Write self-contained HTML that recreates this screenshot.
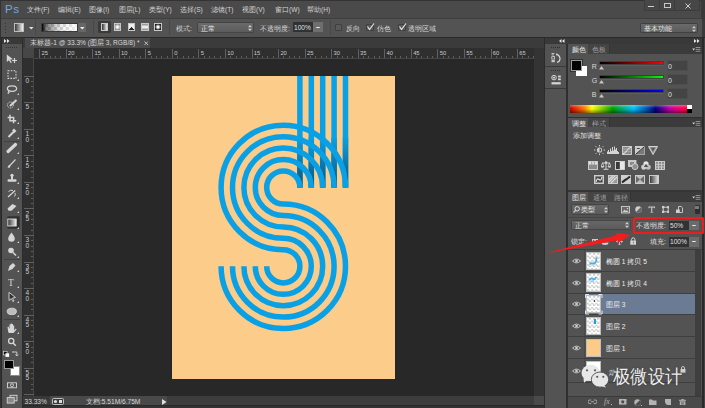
<!DOCTYPE html><html><head><meta charset="utf-8"><style>
*{margin:0;padding:0;box-sizing:border-box}
html,body{width:705px;height:408px;overflow:hidden;background:#282828;font-family:"Liberation Sans",sans-serif}
.t{position:absolute;white-space:nowrap;line-height:1}
</style></head><body>
<div style="position:absolute;left:0px;top:0px;width:705px;height:18px;background:#4a4a4a"></div>
<div style="position:absolute;left:0px;top:0px;width:705px;height:1px;background:#333"></div>
<div style="position:absolute;left:0px;top:0px;width:1px;height:408px;background:#333"></div>
<div class="t" style="left:5px;top:3.2px;font-size:11.6px;color:#70a8e0;letter-spacing:0.4px">Ps</div>
<div class="t" style="left:27px;top:6.5px;font-size:6.6px;color:#d4d4d4;">文件(F)</div>
<div class="t" style="left:58px;top:6.5px;font-size:6.6px;color:#d4d4d4;">编辑(E)</div>
<div class="t" style="left:89px;top:6.5px;font-size:6.6px;color:#d4d4d4;">图像(I)</div>
<div class="t" style="left:118.5px;top:6.5px;font-size:6.6px;color:#d4d4d4;">图层(L)</div>
<div class="t" style="left:149px;top:6.5px;font-size:6.6px;color:#d4d4d4;">类型(Y)</div>
<div class="t" style="left:180px;top:6.5px;font-size:6.6px;color:#d4d4d4;">选择(S)</div>
<div class="t" style="left:211px;top:6.5px;font-size:6.6px;color:#d4d4d4;">滤镜(T)</div>
<div class="t" style="left:242px;top:6.5px;font-size:6.6px;color:#d4d4d4;">视图(V)</div>
<div class="t" style="left:275px;top:6.5px;font-size:6.6px;color:#d4d4d4;">窗口(W)</div>
<div class="t" style="left:307px;top:6.5px;font-size:6.6px;color:#d4d4d4;">帮助(H)</div>
<div style="position:absolute;left:644px;top:0px;width:56px;height:10.5px;background:#474747;border:1px solid #3c3c3c;border-top:none"></div>
<div style="position:absolute;left:659px;top:0px;width:1px;height:10px;background:#3c3c3c"></div>
<div style="position:absolute;left:674px;top:0px;width:1px;height:10px;background:#3c3c3c"></div>
<div style="position:absolute;left:648.3px;top:6.3px;width:6px;height:1.1px;background:#cfcfcf"></div>
<div style="position:absolute;left:664px;top:3px;width:7px;height:5px;border:1.5px solid #c8c8c8"></div>
<svg style="position:absolute;left:685px;top:2.5px" width="6" height="6"><path d="M0.5 0.5L5.5 5.5M5.5 0.5L0.5 5.5" stroke="#d0d0d0" stroke-width="1"/></svg>
<div style="position:absolute;left:701px;top:0px;width:4px;height:408px;background:#3a3a3a"></div>
<div style="position:absolute;left:1px;top:18px;width:701px;height:19px;background:#535353;border-top:1px solid #5e5e5e"></div>
<div style="position:absolute;left:1px;top:17.5px;width:701px;height:1px;background:#3e3e3e"></div>
<div style="position:absolute;left:4.5px;top:22.5px;width:1.2px;height:1.2px;background:#333"></div>
<div style="position:absolute;left:4.5px;top:25.5px;width:1.2px;height:1.2px;background:#333"></div>
<div style="position:absolute;left:4.5px;top:28.5px;width:1.2px;height:1.2px;background:#333"></div>
<div style="position:absolute;left:4.5px;top:31.5px;width:1.2px;height:1.2px;background:#333"></div>
<div style="position:absolute;left:14px;top:23px;width:10px;height:8.5px;background:linear-gradient(90deg,#3a3a3a,#f4f4f4);border:1px solid #bdbdbd"></div>
<svg style="position:absolute;left:28.5px;top:27px" width="5" height="3"><path d="M0 0H4.5L2.25 2.5Z" fill="#e0e0e0"/></svg>
<div style="position:absolute;left:35px;top:20px;width:1px;height:15px;background:#474747"></div>
<div style="position:absolute;left:40.5px;top:23px;width:37.5px;height:9.2px;background:linear-gradient(90deg,#000 0%,rgba(0,0,0,.5) 12%,rgba(0,0,0,.15) 40%,rgba(255,255,255,0) 60%,rgba(255,255,255,.7) 100%),repeating-conic-gradient(#cfcfcf 0 25%,#f4f4f4 0 50%) 0 0/6px 6px;border:0.6px solid #3a3a3a"></div>
<div style="position:absolute;left:78px;top:23px;width:8px;height:9.2px;background:#666"></div>
<svg style="position:absolute;left:80px;top:27px" width="5" height="3"><path d="M0 0H4.5L2.25 2.5Z" fill="#eee"/></svg>
<div style="position:absolute;left:92.5px;top:20px;width:1px;height:15px;background:#474747"></div>
<div style="position:absolute;left:98px;top:21px;width:12.5px;height:12px;background:#3a3a3a;border-radius:1.5px"></div>
<div style="position:absolute;left:100.6px;top:23.2px;width:7.8px;height:7.6px;background:linear-gradient(90deg,#333,#eee);border:1px solid #c8c8c8"></div>
<div style="position:absolute;left:113.6px;top:23.2px;width:7.8px;height:7.6px;background:radial-gradient(circle,#fff 15%,#888 80%);border:1px solid #c8c8c8"></div>
<div style="position:absolute;left:127.6px;top:23.2px;width:7.8px;height:7.6px;background:conic-gradient(from 135deg,#222 0 90deg,#eee 90deg 360deg);border:1px solid #c8c8c8"></div>
<div style="position:absolute;left:140.8px;top:23.2px;width:7.8px;height:7.6px;background:linear-gradient(180deg,#888,#fff 50%,#888);border:1px solid #c8c8c8"></div>
<div style="position:absolute;left:154.4px;top:23.2px;width:7.8px;height:7.6px;background:radial-gradient(circle,#fff 20%,#222 70%);border:1px solid #c8c8c8"></div>
<div style="position:absolute;left:169px;top:20px;width:1px;height:15px;background:#474747"></div>
<div class="t" style="left:176px;top:25.5px;font-size:6.6px;color:#d8d8d8;">模式:</div>
<div style="position:absolute;left:196.6px;top:22.2px;width:57.4px;height:11px;background:linear-gradient(#6a6a6a,#5c5c5c);border:1px solid #454545;border-radius:1.5px"></div>
<div class="t" style="left:201px;top:25.5px;font-size:6.6px;color:#e4e4e4;">正常</div>
<svg style="position:absolute;left:248px;top:25px" width="4" height="6"><path d="M0 2.2L2 0L4 2.2ZM0 3.8L2 6L4 3.8Z" fill="#d0d0d0"/></svg>
<div class="t" style="left:260px;top:25.5px;font-size:6.6px;color:#d8d8d8;">不透明度:</div>
<div style="position:absolute;left:292.8px;top:21.8px;width:20.5px;height:10.6px;background:#313131"></div>
<div class="t" style="left:294px;top:24.8px;font-size:6.6px;color:#dde3e8;">100%</div>
<div style="position:absolute;left:313.3px;top:21.8px;width:10px;height:10.6px;background:#6e6e6e"></div>
<svg style="position:absolute;left:316.3px;top:26.6px" width="4" height="1.5"><path d="M0 0H4L3.2 1.3H0.8Z" fill="#eeeeee"/></svg>
<div style="position:absolute;left:329.5px;top:20px;width:1px;height:15px;background:#474747"></div>
<div style="position:absolute;left:334.6px;top:23.5px;width:7.8px;height:7.8px;background:#595959;border:1px solid #3f3f3f;border-radius:1px"></div>
<div class="t" style="left:345.5px;top:25.5px;font-size:6.6px;color:#d8d8d8;">反向</div>
<div style="position:absolute;left:366.4px;top:23.5px;width:7.8px;height:7.8px;background:#595959;border:1px solid #3f3f3f;border-radius:1px"></div>
<svg style="position:absolute;left:366px;top:22px" width="9" height="9"><path d="M1.5 4.5L3.5 7.5L8 1.5" stroke="#e8e8e8" stroke-width="1.1" fill="none"/></svg>
<div class="t" style="left:377px;top:25.5px;font-size:6.6px;color:#d8d8d8;">仿色</div>
<div style="position:absolute;left:398.3px;top:23.5px;width:7.8px;height:7.8px;background:#595959;border:1px solid #3f3f3f;border-radius:1px"></div>
<svg style="position:absolute;left:398px;top:22px" width="9" height="9"><path d="M1.5 4.5L3.5 7.5L8 1.5" stroke="#e8e8e8" stroke-width="1.1" fill="none"/></svg>
<div class="t" style="left:408px;top:25.5px;font-size:6.6px;color:#d8d8d8;">透明区域</div>
<div style="position:absolute;left:640px;top:23px;width:58px;height:10.3px;background:linear-gradient(#6a6a6a,#5c5c5c);border:1px solid #404040;border-radius:1.5px"></div>
<div class="t" style="left:644px;top:25.5px;font-size:6.6px;color:#e8e8e8;">基本功能</div>
<svg style="position:absolute;left:692px;top:25.5px" width="4" height="6"><path d="M0 2.2L2 0L4 2.2ZM0 3.8L2 6L4 3.8Z" fill="#d0d0d0"/></svg>
<div style="position:absolute;left:0px;top:36.5px;width:705px;height:1px;background:#2a2a2a"></div>
<div style="position:absolute;left:1.5px;top:37.5px;width:20.5px;height:371px;background:#535353"></div>
<div style="position:absolute;left:1.5px;top:37.5px;width:20.5px;height:6px;background:#393939"></div>
<svg style="position:absolute;left:4px;top:39px" width="6" height="4"><path d="M0 0L2.5 2L0 4ZM3 0L5.5 2L3 4Z" fill="#e8e8e8"/></svg>
<div style="position:absolute;left:22px;top:37.5px;width:1px;height:371px;background:#2c2c2c"></div>
<div style="position:absolute;left:6px;top:46.5px;width:11px;height:1px;background:repeating-linear-gradient(90deg,#333 0 1px,transparent 1px 2px)"></div>
<div style="position:absolute;left:6.5px;top:215.9px;width:13.5px;height:13px;background:#2f2f2f;border:1px solid #3a3a3a;border-radius:1.5px"></div>
<svg style="position:absolute;left:0;top:0" width="24" height="408">
<g fill="#d6d6d6" stroke="none">
<path d="M6.8 54.5L13 59.2L10.2 59.6L11.8 62.5L10.6 63L9 60.2L6.8 62Z"/>
<path d="M12 60.5H17M14.5 58V63" stroke="#d6d6d6" stroke-width="1.2"/>
</g>
<rect x="8" y="70.8" width="8" height="7.6" fill="none" stroke="#d6d6d6" stroke-width="1.1" stroke-dasharray="1.6 1.2"/>
<ellipse cx="12" cy="88.6" rx="4.6" ry="2.8" fill="none" stroke="#d6d6d6" stroke-width="1.2"/>
<path d="M8.6 91L8 93.5L9.6 92.5" stroke="#d6d6d6" stroke-width="1" fill="none"/>
<circle cx="10.5" cy="105" r="3" fill="none" stroke="#d6d6d6" stroke-width="1" stroke-dasharray="1.2 0.9"/>
<path d="M10 106L16.5 100" stroke="#d6d6d6" stroke-width="2"/>
<path d="M10 114.8V120.8H16.2M7.6 117.4H13.6V123.3" stroke="#d6d6d6" stroke-width="1.5" fill="none"/>
<path d="M8.5 137L14 131.5" stroke="#d6d6d6" stroke-width="2"/>
<path d="M13 129.5L15.5 132" stroke="#d6d6d6" stroke-width="2.6"/>
<rect x="4" y="141" width="16" height="0.8" fill="#3e3e3e"/>
<path d="M8 151.5L15.5 144.5" stroke="#d6d6d6" stroke-width="3.2" stroke-linecap="round"/>
<path d="M8.5 167L15.5 159.5" stroke="#d6d6d6" stroke-width="1.1"/>
<path d="M7.5 167.5Q8 164.5 10.5 165L9.8 167.8Z" fill="#d6d6d6"/>
<circle cx="12" cy="175.3" r="1.6" fill="#d6d6d6"/>
<rect x="11" y="176" width="2" height="3.5" fill="#d6d6d6"/>
<rect x="7.5" y="179.3" width="9" height="2.5" rx="1" fill="#d6d6d6"/>
<path d="M8 197L15.2 190.5" stroke="#d6d6d6" stroke-width="1.2"/>
<path d="M8.5 191.5Q10.5 189.5 13 190.5M14.5 196.5Q16 194.5 15 193" stroke="#d6d6d6" stroke-width="1" fill="none"/>
<path d="M7.5 208.5L12.5 204L16.5 206L11.5 210.8H8.5Z" fill="#d6d6d6"/>
<rect x="7.8" y="219" width="8.4" height="7" fill="url(#tg)" stroke="#e0e0e0" stroke-width="0.9"/>
<defs><linearGradient id="tg" x1="0" y1="0" x2="1" y2="0"><stop offset="0" stop-color="#333"/><stop offset="1" stop-color="#eee"/></linearGradient></defs>
<path d="M11.5 232.4Q8 237 8.2 238.5A3.3 3.3 0 0 0 14.8 238.5Q15 237 11.5 232.4Z" fill="#d6d6d6"/>
<circle cx="11" cy="250.5" r="2.8" fill="#d6d6d6"/>
<path d="M13 252.5L16 255.5" stroke="#d6d6d6" stroke-width="1.6"/>
<rect x="4" y="259" width="16" height="0.8" fill="#3e3e3e"/>
<path d="M8 271L9.5 266L13 263L15.5 265.5L12.5 269Z" fill="#d6d6d6"/>
<text x="8" y="285.5" font-family="Liberation Serif" font-size="9.5" fill="#d6d6d6">T</text>
<path d="M9 292.3L15.5 297.5L12.5 298L14 301L12.8 301.5L11.3 298.6L9 300.5Z" fill="#333" stroke="#d6d6d6" stroke-width="0.9"/>
<ellipse cx="11.8" cy="311.4" rx="4.6" ry="3.2" fill="#bdbdbd" stroke="#e0e0e0" stroke-width="0.8"/>
<rect x="4" y="319" width="16" height="0.8" fill="#3e3e3e"/>
<path d="M8.2 332L7.5 327L8.5 326.5L9.5 329V324.5H10.6V328.5V323.5H11.8V328.5V324H13V329V325.5H14.2V330.5L15.8 328.6L16.6 329.4L13.5 333H9Z" fill="#d6d6d6"/>
<circle cx="11.2" cy="341" r="2.6" fill="none" stroke="#d6d6d6" stroke-width="1.3"/>
<path d="M13 343L15.8 345.8" stroke="#d6d6d6" stroke-width="1.6"/>
<rect x="3.5" y="351.3" width="3.6" height="3.6" fill="#111" stroke="#d6d6d6" stroke-width="0.7"/>
<rect x="5.5" y="353.3" width="3.6" height="3.6" fill="#fff"/>
<path d="M13.5 352H16.8V355.5M15.5 354.5L16.8 356L18.2 354.5M13.5 351L12.5 352L13.5 353" stroke="#d6d6d6" stroke-width="0.9" fill="none"/>
<rect x="7.5" y="382.8" width="9" height="5" fill="none" stroke="#d6d6d6" stroke-width="0.9"/>
<circle cx="12" cy="385.3" r="1.5" fill="none" stroke="#d6d6d6" stroke-width="0.9"/>
<rect x="10" y="395.3" width="7" height="5.5" fill="#666" stroke="#d6d6d6" stroke-width="0.9"/>
<rect x="7.2" y="397.6" width="7" height="5.5" fill="#888" stroke="#d6d6d6" stroke-width="0.9"/>
</svg>
<div style="position:absolute;left:9.6px;top:366px;width:10px;height:10px;background:#fff;border:1px solid #8a8a8a"></div>
<div style="position:absolute;left:3.8px;top:359.8px;width:9.8px;height:9.6px;background:#000;border:1px solid #9a9a9a"></div>
<svg style="position:absolute;left:17px;top:79px" width="2" height="2"><path d="M2 0V2H0Z" fill="#cfcfcf"/></svg>
<svg style="position:absolute;left:17px;top:93px" width="2" height="2"><path d="M2 0V2H0Z" fill="#cfcfcf"/></svg>
<svg style="position:absolute;left:17px;top:108px" width="2" height="2"><path d="M2 0V2H0Z" fill="#cfcfcf"/></svg>
<svg style="position:absolute;left:17px;top:122px" width="2" height="2"><path d="M2 0V2H0Z" fill="#cfcfcf"/></svg>
<svg style="position:absolute;left:17px;top:137px" width="2" height="2"><path d="M2 0V2H0Z" fill="#cfcfcf"/></svg>
<svg style="position:absolute;left:17px;top:152px" width="2" height="2"><path d="M2 0V2H0Z" fill="#cfcfcf"/></svg>
<svg style="position:absolute;left:17px;top:167px" width="2" height="2"><path d="M2 0V2H0Z" fill="#cfcfcf"/></svg>
<svg style="position:absolute;left:17px;top:182px" width="2" height="2"><path d="M2 0V2H0Z" fill="#cfcfcf"/></svg>
<svg style="position:absolute;left:17px;top:197px" width="2" height="2"><path d="M2 0V2H0Z" fill="#cfcfcf"/></svg>
<svg style="position:absolute;left:17px;top:211px" width="2" height="2"><path d="M2 0V2H0Z" fill="#cfcfcf"/></svg>
<svg style="position:absolute;left:17px;top:227px" width="2" height="2"><path d="M2 0V2H0Z" fill="#cfcfcf"/></svg>
<svg style="position:absolute;left:17px;top:241px" width="2" height="2"><path d="M2 0V2H0Z" fill="#cfcfcf"/></svg>
<svg style="position:absolute;left:17px;top:256px" width="2" height="2"><path d="M2 0V2H0Z" fill="#cfcfcf"/></svg>
<svg style="position:absolute;left:17px;top:270px" width="2" height="2"><path d="M2 0V2H0Z" fill="#cfcfcf"/></svg>
<svg style="position:absolute;left:17px;top:286px" width="2" height="2"><path d="M2 0V2H0Z" fill="#cfcfcf"/></svg>
<svg style="position:absolute;left:17px;top:301px" width="2" height="2"><path d="M2 0V2H0Z" fill="#cfcfcf"/></svg>
<svg style="position:absolute;left:17px;top:315px" width="2" height="2"><path d="M2 0V2H0Z" fill="#cfcfcf"/></svg>
<svg style="position:absolute;left:17px;top:332px" width="2" height="2"><path d="M2 0V2H0Z" fill="#cfcfcf"/></svg>
<div style="position:absolute;left:23px;top:37.5px;width:520.5px;height:10.5px;background:#3b3b3b"></div>
<div style="position:absolute;left:25px;top:37.7px;width:125px;height:10px;background:#4b4b4b"></div>
<div class="t" style="left:30px;top:40.3px;font-size:6.6px;color:#d8d8d8;">未标题-1 @ 33.3% (图层 3, RGB/8) *</div>
<svg style="position:absolute;left:143.8px;top:41.2px" width="4.5" height="4.5"><path d="M0.4 0.4L4.1 4.1M4.1 0.4L0.4 4.1" stroke="#c8c8c8" stroke-width="0.9"/></svg>
<div style="position:absolute;left:23px;top:47.8px;width:511px;height:10.3px;background:#2f2f2f"></div>
<div style="position:absolute;left:33.5px;top:57.6px;width:500.5px;height:1px;background:#454545"></div>
<div style="position:absolute;left:23px;top:47.8px;width:10.5px;height:10.3px;background:#474747"></div>
<div style="position:absolute;left:23px;top:58.1px;width:10.5px;height:338.7px;background:#2f2f2f"></div>
<div style="position:absolute;left:33.2px;top:58.1px;width:1px;height:338.7px;background:#454545"></div>
<div style="position:absolute;left:39.150000000000006px;top:48.5px;width:1px;height:9.5px;background:#606060"></div>
<div class="t" style="left:41.45px;top:50.5px;font-size:5.8px;color:#c4cad0;">25</div>
<div style="position:absolute;left:44.46000000000001px;top:55.8px;width:1px;height:2px;background:#5e5e5e"></div>
<div style="position:absolute;left:49.77000000000001px;top:55.8px;width:1px;height:2px;background:#5e5e5e"></div>
<div style="position:absolute;left:55.080000000000005px;top:55.8px;width:1px;height:2px;background:#5e5e5e"></div>
<div style="position:absolute;left:60.39000000000001px;top:55.8px;width:1px;height:2px;background:#5e5e5e"></div>
<div style="position:absolute;left:65.7px;top:48.5px;width:1px;height:9.5px;background:#606060"></div>
<div class="t" style="left:68.0px;top:50.5px;font-size:5.8px;color:#c4cad0;">20</div>
<div style="position:absolute;left:71.01px;top:55.8px;width:1px;height:2px;background:#5e5e5e"></div>
<div style="position:absolute;left:76.32000000000001px;top:55.8px;width:1px;height:2px;background:#5e5e5e"></div>
<div style="position:absolute;left:81.63000000000001px;top:55.8px;width:1px;height:2px;background:#5e5e5e"></div>
<div style="position:absolute;left:86.94px;top:55.8px;width:1px;height:2px;background:#5e5e5e"></div>
<div style="position:absolute;left:92.25px;top:48.5px;width:1px;height:9.5px;background:#606060"></div>
<div class="t" style="left:94.55px;top:50.5px;font-size:5.8px;color:#c4cad0;">15</div>
<div style="position:absolute;left:97.56px;top:55.8px;width:1px;height:2px;background:#5e5e5e"></div>
<div style="position:absolute;left:102.87px;top:55.8px;width:1px;height:2px;background:#5e5e5e"></div>
<div style="position:absolute;left:108.18px;top:55.8px;width:1px;height:2px;background:#5e5e5e"></div>
<div style="position:absolute;left:113.49000000000001px;top:55.8px;width:1px;height:2px;background:#5e5e5e"></div>
<div style="position:absolute;left:118.80000000000001px;top:48.5px;width:1px;height:9.5px;background:#606060"></div>
<div class="t" style="left:121.10000000000001px;top:50.5px;font-size:5.8px;color:#c4cad0;">10</div>
<div style="position:absolute;left:124.11000000000001px;top:55.8px;width:1px;height:2px;background:#5e5e5e"></div>
<div style="position:absolute;left:129.42000000000002px;top:55.8px;width:1px;height:2px;background:#5e5e5e"></div>
<div style="position:absolute;left:134.73000000000002px;top:55.8px;width:1px;height:2px;background:#5e5e5e"></div>
<div style="position:absolute;left:140.04000000000002px;top:55.8px;width:1px;height:2px;background:#5e5e5e"></div>
<div style="position:absolute;left:145.35px;top:48.5px;width:1px;height:9.5px;background:#606060"></div>
<div class="t" style="left:147.65px;top:50.5px;font-size:5.8px;color:#c4cad0;">5</div>
<div style="position:absolute;left:150.66px;top:55.8px;width:1px;height:2px;background:#5e5e5e"></div>
<div style="position:absolute;left:155.97px;top:55.8px;width:1px;height:2px;background:#5e5e5e"></div>
<div style="position:absolute;left:161.28px;top:55.8px;width:1px;height:2px;background:#5e5e5e"></div>
<div style="position:absolute;left:166.59px;top:55.8px;width:1px;height:2px;background:#5e5e5e"></div>
<div style="position:absolute;left:171.9px;top:48.5px;width:1px;height:9.5px;background:#606060"></div>
<div class="t" style="left:174.20000000000002px;top:50.5px;font-size:5.8px;color:#c4cad0;">0</div>
<div style="position:absolute;left:177.21px;top:55.8px;width:1px;height:2px;background:#5e5e5e"></div>
<div style="position:absolute;left:182.52px;top:55.8px;width:1px;height:2px;background:#5e5e5e"></div>
<div style="position:absolute;left:187.83px;top:55.8px;width:1px;height:2px;background:#5e5e5e"></div>
<div style="position:absolute;left:193.14000000000001px;top:55.8px;width:1px;height:2px;background:#5e5e5e"></div>
<div style="position:absolute;left:198.45000000000002px;top:48.5px;width:1px;height:9.5px;background:#606060"></div>
<div class="t" style="left:200.75000000000003px;top:50.5px;font-size:5.8px;color:#c4cad0;">5</div>
<div style="position:absolute;left:203.76000000000002px;top:55.8px;width:1px;height:2px;background:#5e5e5e"></div>
<div style="position:absolute;left:209.07000000000002px;top:55.8px;width:1px;height:2px;background:#5e5e5e"></div>
<div style="position:absolute;left:214.38000000000002px;top:55.8px;width:1px;height:2px;background:#5e5e5e"></div>
<div style="position:absolute;left:219.69000000000003px;top:55.8px;width:1px;height:2px;background:#5e5e5e"></div>
<div style="position:absolute;left:225.0px;top:48.5px;width:1px;height:9.5px;background:#606060"></div>
<div class="t" style="left:227.3px;top:50.5px;font-size:5.8px;color:#c4cad0;">10</div>
<div style="position:absolute;left:230.31px;top:55.8px;width:1px;height:2px;background:#5e5e5e"></div>
<div style="position:absolute;left:235.62px;top:55.8px;width:1px;height:2px;background:#5e5e5e"></div>
<div style="position:absolute;left:240.93px;top:55.8px;width:1px;height:2px;background:#5e5e5e"></div>
<div style="position:absolute;left:246.24px;top:55.8px;width:1px;height:2px;background:#5e5e5e"></div>
<div style="position:absolute;left:251.55px;top:48.5px;width:1px;height:9.5px;background:#606060"></div>
<div class="t" style="left:253.85000000000002px;top:50.5px;font-size:5.8px;color:#c4cad0;">15</div>
<div style="position:absolute;left:256.86px;top:55.8px;width:1px;height:2px;background:#5e5e5e"></div>
<div style="position:absolute;left:262.17px;top:55.8px;width:1px;height:2px;background:#5e5e5e"></div>
<div style="position:absolute;left:267.48px;top:55.8px;width:1px;height:2px;background:#5e5e5e"></div>
<div style="position:absolute;left:272.79px;top:55.8px;width:1px;height:2px;background:#5e5e5e"></div>
<div style="position:absolute;left:278.1px;top:48.5px;width:1px;height:9.5px;background:#606060"></div>
<div class="t" style="left:280.40000000000003px;top:50.5px;font-size:5.8px;color:#c4cad0;">20</div>
<div style="position:absolute;left:283.41px;top:55.8px;width:1px;height:2px;background:#5e5e5e"></div>
<div style="position:absolute;left:288.72px;top:55.8px;width:1px;height:2px;background:#5e5e5e"></div>
<div style="position:absolute;left:294.03000000000003px;top:55.8px;width:1px;height:2px;background:#5e5e5e"></div>
<div style="position:absolute;left:299.34000000000003px;top:55.8px;width:1px;height:2px;background:#5e5e5e"></div>
<div style="position:absolute;left:304.65px;top:48.5px;width:1px;height:9.5px;background:#606060"></div>
<div class="t" style="left:306.95px;top:50.5px;font-size:5.8px;color:#c4cad0;">25</div>
<div style="position:absolute;left:309.96px;top:55.8px;width:1px;height:2px;background:#5e5e5e"></div>
<div style="position:absolute;left:315.27px;top:55.8px;width:1px;height:2px;background:#5e5e5e"></div>
<div style="position:absolute;left:320.58px;top:55.8px;width:1px;height:2px;background:#5e5e5e"></div>
<div style="position:absolute;left:325.89px;top:55.8px;width:1px;height:2px;background:#5e5e5e"></div>
<div style="position:absolute;left:331.20000000000005px;top:48.5px;width:1px;height:9.5px;background:#606060"></div>
<div class="t" style="left:333.50000000000006px;top:50.5px;font-size:5.8px;color:#c4cad0;">30</div>
<div style="position:absolute;left:336.51000000000005px;top:55.8px;width:1px;height:2px;background:#5e5e5e"></div>
<div style="position:absolute;left:341.82000000000005px;top:55.8px;width:1px;height:2px;background:#5e5e5e"></div>
<div style="position:absolute;left:347.13000000000005px;top:55.8px;width:1px;height:2px;background:#5e5e5e"></div>
<div style="position:absolute;left:352.44000000000005px;top:55.8px;width:1px;height:2px;background:#5e5e5e"></div>
<div style="position:absolute;left:357.75px;top:48.5px;width:1px;height:9.5px;background:#606060"></div>
<div class="t" style="left:360.05px;top:50.5px;font-size:5.8px;color:#c4cad0;">35</div>
<div style="position:absolute;left:363.06px;top:55.8px;width:1px;height:2px;background:#5e5e5e"></div>
<div style="position:absolute;left:368.37px;top:55.8px;width:1px;height:2px;background:#5e5e5e"></div>
<div style="position:absolute;left:373.68px;top:55.8px;width:1px;height:2px;background:#5e5e5e"></div>
<div style="position:absolute;left:378.99px;top:55.8px;width:1px;height:2px;background:#5e5e5e"></div>
<div style="position:absolute;left:384.3px;top:48.5px;width:1px;height:9.5px;background:#606060"></div>
<div class="t" style="left:386.6px;top:50.5px;font-size:5.8px;color:#c4cad0;">40</div>
<div style="position:absolute;left:389.61px;top:55.8px;width:1px;height:2px;background:#5e5e5e"></div>
<div style="position:absolute;left:394.92px;top:55.8px;width:1px;height:2px;background:#5e5e5e"></div>
<div style="position:absolute;left:400.23px;top:55.8px;width:1px;height:2px;background:#5e5e5e"></div>
<div style="position:absolute;left:405.54px;top:55.8px;width:1px;height:2px;background:#5e5e5e"></div>
<div style="position:absolute;left:410.85px;top:48.5px;width:1px;height:9.5px;background:#606060"></div>
<div class="t" style="left:413.15000000000003px;top:50.5px;font-size:5.8px;color:#c4cad0;">45</div>
<div style="position:absolute;left:416.16px;top:55.8px;width:1px;height:2px;background:#5e5e5e"></div>
<div style="position:absolute;left:421.47px;top:55.8px;width:1px;height:2px;background:#5e5e5e"></div>
<div style="position:absolute;left:426.78000000000003px;top:55.8px;width:1px;height:2px;background:#5e5e5e"></div>
<div style="position:absolute;left:432.09000000000003px;top:55.8px;width:1px;height:2px;background:#5e5e5e"></div>
<div style="position:absolute;left:437.4px;top:48.5px;width:1px;height:9.5px;background:#606060"></div>
<div class="t" style="left:439.7px;top:50.5px;font-size:5.8px;color:#c4cad0;">50</div>
<div style="position:absolute;left:442.71px;top:55.8px;width:1px;height:2px;background:#5e5e5e"></div>
<div style="position:absolute;left:448.02px;top:55.8px;width:1px;height:2px;background:#5e5e5e"></div>
<div style="position:absolute;left:453.33px;top:55.8px;width:1px;height:2px;background:#5e5e5e"></div>
<div style="position:absolute;left:458.64px;top:55.8px;width:1px;height:2px;background:#5e5e5e"></div>
<div style="position:absolute;left:463.95000000000005px;top:48.5px;width:1px;height:9.5px;background:#606060"></div>
<div class="t" style="left:466.25000000000006px;top:50.5px;font-size:5.8px;color:#c4cad0;">55</div>
<div style="position:absolute;left:469.26000000000005px;top:55.8px;width:1px;height:2px;background:#5e5e5e"></div>
<div style="position:absolute;left:474.57000000000005px;top:55.8px;width:1px;height:2px;background:#5e5e5e"></div>
<div style="position:absolute;left:479.88000000000005px;top:55.8px;width:1px;height:2px;background:#5e5e5e"></div>
<div style="position:absolute;left:485.19000000000005px;top:55.8px;width:1px;height:2px;background:#5e5e5e"></div>
<div style="position:absolute;left:490.5px;top:48.5px;width:1px;height:9.5px;background:#606060"></div>
<div class="t" style="left:492.8px;top:50.5px;font-size:5.8px;color:#c4cad0;">60</div>
<div style="position:absolute;left:495.81px;top:55.8px;width:1px;height:2px;background:#5e5e5e"></div>
<div style="position:absolute;left:501.12px;top:55.8px;width:1px;height:2px;background:#5e5e5e"></div>
<div style="position:absolute;left:506.43px;top:55.8px;width:1px;height:2px;background:#5e5e5e"></div>
<div style="position:absolute;left:511.74px;top:55.8px;width:1px;height:2px;background:#5e5e5e"></div>
<div style="position:absolute;left:517.0500000000001px;top:48.5px;width:1px;height:9.5px;background:#606060"></div>
<div class="t" style="left:519.35px;top:50.5px;font-size:5.8px;color:#c4cad0;">65</div>
<div style="position:absolute;left:522.36px;top:55.8px;width:1px;height:2px;background:#5e5e5e"></div>
<div style="position:absolute;left:527.6700000000001px;top:55.8px;width:1px;height:2px;background:#5e5e5e"></div>
<div style="position:absolute;left:532.98px;top:55.8px;width:1px;height:2px;background:#5e5e5e"></div>
<div style="position:absolute;left:24px;top:75.7px;width:9.5px;height:1px;background:#606060"></div>
<div class="t" style="left:25.6px;top:77.8px;font-size:6.6px;color:#c4cad0;">0</div>
<div style="position:absolute;left:31.3px;top:81.01px;width:2px;height:1px;background:#5e5e5e"></div>
<div style="position:absolute;left:31.3px;top:86.32000000000001px;width:2px;height:1px;background:#5e5e5e"></div>
<div style="position:absolute;left:31.3px;top:91.63000000000001px;width:2px;height:1px;background:#5e5e5e"></div>
<div style="position:absolute;left:31.3px;top:96.94px;width:2px;height:1px;background:#5e5e5e"></div>
<div style="position:absolute;left:24px;top:102.25px;width:9.5px;height:1px;background:#606060"></div>
<div class="t" style="left:25.6px;top:104.35px;font-size:6.6px;color:#c4cad0;">5</div>
<div style="position:absolute;left:31.3px;top:107.56px;width:2px;height:1px;background:#5e5e5e"></div>
<div style="position:absolute;left:31.3px;top:112.87px;width:2px;height:1px;background:#5e5e5e"></div>
<div style="position:absolute;left:31.3px;top:118.18px;width:2px;height:1px;background:#5e5e5e"></div>
<div style="position:absolute;left:31.3px;top:123.49000000000001px;width:2px;height:1px;background:#5e5e5e"></div>
<div style="position:absolute;left:24px;top:128.8px;width:9.5px;height:1px;background:#606060"></div>
<div class="t" style="left:25.6px;top:130.9px;font-size:6.6px;color:#c4cad0;">1</div>
<div class="t" style="left:25.6px;top:136.5px;font-size:6.6px;color:#c4cad0;">0</div>
<div style="position:absolute;left:31.3px;top:134.11px;width:2px;height:1px;background:#5e5e5e"></div>
<div style="position:absolute;left:31.3px;top:139.42000000000002px;width:2px;height:1px;background:#5e5e5e"></div>
<div style="position:absolute;left:31.3px;top:144.73000000000002px;width:2px;height:1px;background:#5e5e5e"></div>
<div style="position:absolute;left:31.3px;top:150.04000000000002px;width:2px;height:1px;background:#5e5e5e"></div>
<div style="position:absolute;left:24px;top:155.35000000000002px;width:9.5px;height:1px;background:#606060"></div>
<div class="t" style="left:25.6px;top:157.45000000000002px;font-size:6.6px;color:#c4cad0;">1</div>
<div class="t" style="left:25.6px;top:163.05px;font-size:6.6px;color:#c4cad0;">5</div>
<div style="position:absolute;left:31.3px;top:160.66000000000003px;width:2px;height:1px;background:#5e5e5e"></div>
<div style="position:absolute;left:31.3px;top:165.97000000000003px;width:2px;height:1px;background:#5e5e5e"></div>
<div style="position:absolute;left:31.3px;top:171.28000000000003px;width:2px;height:1px;background:#5e5e5e"></div>
<div style="position:absolute;left:31.3px;top:176.59000000000003px;width:2px;height:1px;background:#5e5e5e"></div>
<div style="position:absolute;left:24px;top:181.9px;width:9.5px;height:1px;background:#606060"></div>
<div class="t" style="left:25.6px;top:184.0px;font-size:6.6px;color:#c4cad0;">2</div>
<div class="t" style="left:25.6px;top:189.6px;font-size:6.6px;color:#c4cad0;">0</div>
<div style="position:absolute;left:31.3px;top:187.21px;width:2px;height:1px;background:#5e5e5e"></div>
<div style="position:absolute;left:31.3px;top:192.52px;width:2px;height:1px;background:#5e5e5e"></div>
<div style="position:absolute;left:31.3px;top:197.83px;width:2px;height:1px;background:#5e5e5e"></div>
<div style="position:absolute;left:31.3px;top:203.14000000000001px;width:2px;height:1px;background:#5e5e5e"></div>
<div style="position:absolute;left:24px;top:208.45px;width:9.5px;height:1px;background:#606060"></div>
<div class="t" style="left:25.6px;top:210.54999999999998px;font-size:6.6px;color:#c4cad0;">2</div>
<div class="t" style="left:25.6px;top:216.14999999999998px;font-size:6.6px;color:#c4cad0;">5</div>
<div style="position:absolute;left:31.3px;top:213.76px;width:2px;height:1px;background:#5e5e5e"></div>
<div style="position:absolute;left:31.3px;top:219.07px;width:2px;height:1px;background:#5e5e5e"></div>
<div style="position:absolute;left:31.3px;top:224.38px;width:2px;height:1px;background:#5e5e5e"></div>
<div style="position:absolute;left:31.3px;top:229.69px;width:2px;height:1px;background:#5e5e5e"></div>
<div style="position:absolute;left:24px;top:235.0px;width:9.5px;height:1px;background:#606060"></div>
<div class="t" style="left:25.6px;top:237.1px;font-size:6.6px;color:#c4cad0;">3</div>
<div class="t" style="left:25.6px;top:242.7px;font-size:6.6px;color:#c4cad0;">0</div>
<div style="position:absolute;left:31.3px;top:240.31px;width:2px;height:1px;background:#5e5e5e"></div>
<div style="position:absolute;left:31.3px;top:245.62px;width:2px;height:1px;background:#5e5e5e"></div>
<div style="position:absolute;left:31.3px;top:250.93px;width:2px;height:1px;background:#5e5e5e"></div>
<div style="position:absolute;left:31.3px;top:256.24px;width:2px;height:1px;background:#5e5e5e"></div>
<div style="position:absolute;left:24px;top:261.55px;width:9.5px;height:1px;background:#606060"></div>
<div class="t" style="left:25.6px;top:263.65000000000003px;font-size:6.6px;color:#c4cad0;">3</div>
<div class="t" style="left:25.6px;top:269.25000000000006px;font-size:6.6px;color:#c4cad0;">5</div>
<div style="position:absolute;left:31.3px;top:266.86px;width:2px;height:1px;background:#5e5e5e"></div>
<div style="position:absolute;left:31.3px;top:272.17px;width:2px;height:1px;background:#5e5e5e"></div>
<div style="position:absolute;left:31.3px;top:277.48px;width:2px;height:1px;background:#5e5e5e"></div>
<div style="position:absolute;left:31.3px;top:282.79px;width:2px;height:1px;background:#5e5e5e"></div>
<div style="position:absolute;left:24px;top:288.1px;width:9.5px;height:1px;background:#606060"></div>
<div class="t" style="left:25.6px;top:290.20000000000005px;font-size:6.6px;color:#c4cad0;">4</div>
<div class="t" style="left:25.6px;top:295.80000000000007px;font-size:6.6px;color:#c4cad0;">0</div>
<div style="position:absolute;left:31.3px;top:293.41px;width:2px;height:1px;background:#5e5e5e"></div>
<div style="position:absolute;left:31.3px;top:298.72px;width:2px;height:1px;background:#5e5e5e"></div>
<div style="position:absolute;left:31.3px;top:304.03000000000003px;width:2px;height:1px;background:#5e5e5e"></div>
<div style="position:absolute;left:31.3px;top:309.34000000000003px;width:2px;height:1px;background:#5e5e5e"></div>
<div style="position:absolute;left:24px;top:314.65000000000003px;width:9.5px;height:1px;background:#606060"></div>
<div class="t" style="left:25.6px;top:316.75000000000006px;font-size:6.6px;color:#c4cad0;">4</div>
<div class="t" style="left:25.6px;top:322.3500000000001px;font-size:6.6px;color:#c4cad0;">5</div>
<div style="position:absolute;left:31.3px;top:319.96000000000004px;width:2px;height:1px;background:#5e5e5e"></div>
<div style="position:absolute;left:31.3px;top:325.27000000000004px;width:2px;height:1px;background:#5e5e5e"></div>
<div style="position:absolute;left:31.3px;top:330.58000000000004px;width:2px;height:1px;background:#5e5e5e"></div>
<div style="position:absolute;left:31.3px;top:335.89000000000004px;width:2px;height:1px;background:#5e5e5e"></div>
<div style="position:absolute;left:24px;top:341.2px;width:9.5px;height:1px;background:#606060"></div>
<div class="t" style="left:25.6px;top:343.3px;font-size:6.6px;color:#c4cad0;">5</div>
<div class="t" style="left:25.6px;top:348.90000000000003px;font-size:6.6px;color:#c4cad0;">0</div>
<div style="position:absolute;left:31.3px;top:346.51px;width:2px;height:1px;background:#5e5e5e"></div>
<div style="position:absolute;left:31.3px;top:351.82px;width:2px;height:1px;background:#5e5e5e"></div>
<div style="position:absolute;left:31.3px;top:357.13px;width:2px;height:1px;background:#5e5e5e"></div>
<div style="position:absolute;left:31.3px;top:362.44px;width:2px;height:1px;background:#5e5e5e"></div>
<div style="position:absolute;left:24px;top:367.75px;width:9.5px;height:1px;background:#606060"></div>
<div class="t" style="left:25.6px;top:369.85px;font-size:6.6px;color:#c4cad0;">5</div>
<div class="t" style="left:25.6px;top:375.45000000000005px;font-size:6.6px;color:#c4cad0;">5</div>
<div style="position:absolute;left:31.3px;top:373.06px;width:2px;height:1px;background:#5e5e5e"></div>
<div style="position:absolute;left:31.3px;top:378.37px;width:2px;height:1px;background:#5e5e5e"></div>
<div style="position:absolute;left:31.3px;top:383.68px;width:2px;height:1px;background:#5e5e5e"></div>
<div style="position:absolute;left:31.3px;top:388.99px;width:2px;height:1px;background:#5e5e5e"></div>
<div style="position:absolute;left:24px;top:394.3px;width:9.5px;height:1px;background:#606060"></div>
<div style="position:absolute;left:534px;top:47.8px;width:9.5px;height:348.5px;background:#343434"></div>
<div style="position:absolute;left:534px;top:396.2px;width:9.5px;height:9.3px;background:#4a4a4a"></div>
<div style="position:absolute;left:23px;top:396.2px;width:511px;height:9.3px;background:#3d3d3d"></div>
<div style="position:absolute;left:23px;top:396.2px;width:27px;height:9.3px;background:#393939"></div>
<div style="position:absolute;left:50px;top:396.2px;width:117px;height:9.3px;background:#494949"></div>
<div class="t" style="left:24.5px;top:399px;font-size:6.6px;color:#d0d6dc;">33.33%</div>
<svg style="position:absolute;left:52px;top:398px" width="12" height="7"><rect x="0.5" y="0.5" width="11" height="6" rx="1" fill="#3a3a3a" stroke="#cfcfcf" stroke-width="0.9"/><circle cx="3.5" cy="3.5" r="1.6" fill="#ddd"/><rect x="7" y="2" width="3" height="3" fill="#ddd"/></svg>
<div class="t" style="left:86px;top:398.8px;font-size:6.6px;color:#d8d8d8;">文档:5.51M/6.75M</div>
<svg style="position:absolute;left:162px;top:398.5px" width="5" height="6"><path d="M0 0L4.5 3L0 6Z" fill="#e0e0e0"/></svg>
<div style="position:absolute;left:23px;top:405.5px;width:520.5px;height:2.5px;background:#323232"></div>
<div style="position:absolute;left:172px;top:76px;width:223.3px;height:302.8px;background:#fbcc8a;box-shadow:0 0 1.5px 0.3px rgba(0,0,0,.55)"></div>
<svg style="position:absolute;left:0;top:0" width="705" height="408"><defs><linearGradient id="sh" x1="0" y1="0" x2="0" y2="1"><stop offset="0" stop-color="#0aa0e6"/><stop offset="0.35" stop-color="#0c86c0"/><stop offset="1" stop-color="#08527c"/></linearGradient></defs><rect x="297.15" y="76" width="5.5" height="111.50" fill="#0aa0e6"/><rect x="297.15" y="137.50" width="5.5" height="50" fill="url(#sh)"/><rect x="308.55" y="76" width="5.5" height="111.50" fill="#0aa0e6"/><rect x="308.55" y="137.50" width="5.5" height="50" fill="url(#sh)"/><rect x="319.95" y="76" width="5.5" height="111.50" fill="#0aa0e6"/><rect x="319.95" y="137.50" width="5.5" height="50" fill="url(#sh)"/><rect x="331.35" y="76" width="5.5" height="111.50" fill="#0aa0e6"/><rect x="331.35" y="137.50" width="5.5" height="50" fill="url(#sh)"/><rect x="342.75" y="76" width="5.5" height="111.50" fill="#0aa0e6"/><rect x="342.75" y="137.50" width="5.5" height="50" fill="url(#sh)"/><path d="M299.90 187.50 A16.60 16.60 0 1 0 283.30 204.10 A62.20 62.20 0 1 1 221.10 266.30" fill="none" stroke="#0aa0e6" stroke-width="5.5"/><path d="M311.30 187.50 A28.00 28.00 0 1 0 283.30 215.50 A50.80 50.80 0 1 1 232.50 266.30" fill="none" stroke="#0aa0e6" stroke-width="5.5"/><path d="M322.70 187.50 A39.40 39.40 0 1 0 283.30 226.90 A39.40 39.40 0 1 1 243.90 266.30" fill="none" stroke="#0aa0e6" stroke-width="5.5"/><path d="M334.10 187.50 A50.80 50.80 0 1 0 283.30 238.30 A28.00 28.00 0 1 1 255.30 266.30" fill="none" stroke="#0aa0e6" stroke-width="5.5"/><path d="M345.50 187.50 A62.20 62.20 0 1 0 283.30 249.70 A16.60 16.60 0 1 1 266.70 266.30" fill="none" stroke="#0aa0e6" stroke-width="5.5"/></svg>
<div style="position:absolute;left:543.5px;top:37.5px;width:161.5px;height:371px;background:#3a3a3a"></div>
<div style="position:absolute;left:543.5px;top:37.5px;width:158px;height:6px;background:#393939"></div>
<svg style="position:absolute;left:559px;top:39px" width="6" height="4"><path d="M2.5 0L0 2L2.5 4ZM5.5 0L3 2L5.5 4Z" fill="#e8e8e8"/></svg>
<svg style="position:absolute;left:694px;top:39px" width="6" height="4"><path d="M0 0L2.5 2L0 4ZM3 0L5.5 2L3 4Z" fill="#e8e8e8"/></svg>
<div style="position:absolute;left:545px;top:43.5px;width:21px;height:365px;background:#535353"></div>
<div style="position:absolute;left:567.5px;top:43.5px;width:134px;height:365px;background:#535353"></div>
<div style="position:absolute;left:543.5px;top:37.5px;width:1.5px;height:371px;background:#2b2b2b"></div>
<div style="position:absolute;left:566px;top:43.5px;width:1.5px;height:365px;background:#2f2f2f"></div>
<div style="position:absolute;left:551px;top:46.5px;width:10px;height:1px;background:repeating-linear-gradient(90deg,#2e2e2e 0 1px,transparent 1px 2px)"></div>
<div style="position:absolute;left:551px;top:69.5px;width:10px;height:1px;background:repeating-linear-gradient(90deg,#2e2e2e 0 1px,transparent 1px 2px)"></div>
<div style="position:absolute;left:545px;top:66.2px;width:21px;height:1px;background:#3a3a3a"></div>
<div style="position:absolute;left:545px;top:88.1px;width:21px;height:1px;background:#3a3a3a"></div>
<svg style="position:absolute;left:551px;top:53px" width="10" height="10"><path d="M0.5 0.5H3.5M2 0.5V2.8M0.5 1.8H1.5" stroke="#d0d0d0" stroke-width="0.8"/><rect x="0.8" y="3.6" width="2.8" height="2.4" fill="none" stroke="#d0d0d0" stroke-width="0.8"/><rect x="0.5" y="7" width="3.3" height="2.2" fill="#c8c8c8"/><path d="M5.8 1.2Q9.3 3 9 6T6 9.3" stroke="#e0e0e0" stroke-width="1.1" fill="none"/><path d="M5 0.3L7 1.3L5.5 2.8Z" fill="#e0e0e0"/></svg>
<svg style="position:absolute;left:551px;top:75px" width="11" height="10"><circle cx="3" cy="2.6" r="2.3" fill="none" stroke="#d6d6d6" stroke-width="1"/><rect x="1.8" y="1.8" width="2.2" height="1.6" fill="#d6d6d6"/><rect x="7" y="0.6" width="2.8" height="1.8" fill="#d6d6d6"/><rect x="7" y="3.4" width="2.8" height="1.8" fill="#d6d6d6"/><rect x="0.5" y="7.2" width="9.2" height="2.2" fill="#d6d6d6"/></svg>
<div style="position:absolute;left:567.5px;top:44px;width:134px;height:9.6px;background:#3b3b3b"></div>
<div style="position:absolute;left:567.5px;top:44px;width:20.8px;height:9.6px;background:#535353"></div>
<div style="position:absolute;left:588.3px;top:44px;width:21px;height:9.6px;background:#444"></div>
<div style="position:absolute;left:608.6999999999999px;top:44px;width:0.8px;height:9.6px;background:#353535"></div>
<div class="t" style="left:571.8px;top:46.6px;font-size:6.6px;color:#e8e8e8;">颜色</div>
<div class="t" style="left:592.3px;top:46.6px;font-size:6.6px;color:#a0a0a0;">色板</div>
<svg style="position:absolute;left:691.8px;top:46.6px" width="9" height="6"><path d="M0.3 1.6H3L1.65 3.4Z" fill="#d8d8d8"/><path d="M3.6 0.5H8.4M3.6 2.4H8.4M3.6 4.3H8.4" stroke="#9a9a9a" stroke-width="0.9"/></svg>
<div style="position:absolute;left:570.6px;top:59.5px;width:11.3px;height:11.3px;background:#000;border:1px solid #9a9a9a;outline:1px solid #333"></div>
<div style="position:absolute;left:576.3px;top:65.8px;width:10.5px;height:10.5px;background:#fff;z-index:0"></div>
<div style="position:absolute;left:570.6px;top:59.5px;width:11.3px;height:11.3px;background:#000;border:1px solid #9a9a9a"></div>
<div class="t" style="left:591.7px;top:62.5px;font-size:7px;color:#d8d8d8;">R</div>
<div style="position:absolute;left:600.4px;top:61.9px;width:62.8px;height:2.4px;background:linear-gradient(90deg,#000,#f00);box-shadow:0 0 0 0.8px #3a3a3a,0 1px 0 0.5px #6a6a6a"></div>
<svg style="position:absolute;left:598.5px;top:65.5px" width="5" height="4"><path d="M2.5 0L5 3.6H0Z" fill="#c4c4c4"/></svg>
<div style="position:absolute;left:666.8px;top:59.9px;width:21.4px;height:10.9px;background:#444;border:0.8px solid #4e4e4e"></div>
<div class="t" style="left:668px;top:63.199999999999996px;font-size:7px;color:#e0e0e0;">0</div>
<div class="t" style="left:591.7px;top:76.5px;font-size:7px;color:#d8d8d8;">G</div>
<div style="position:absolute;left:600.4px;top:75.9px;width:62.8px;height:2.4px;background:linear-gradient(90deg,#000,#0f0);box-shadow:0 0 0 0.8px #3a3a3a,0 1px 0 0.5px #6a6a6a"></div>
<svg style="position:absolute;left:598.5px;top:79.5px" width="5" height="4"><path d="M2.5 0L5 3.6H0Z" fill="#c4c4c4"/></svg>
<div style="position:absolute;left:666.8px;top:73.9px;width:21.4px;height:10.9px;background:#444;border:0.8px solid #4e4e4e"></div>
<div class="t" style="left:668px;top:77.2px;font-size:7px;color:#e0e0e0;">0</div>
<div class="t" style="left:591.7px;top:90.5px;font-size:7px;color:#d8d8d8;">B</div>
<div style="position:absolute;left:600.4px;top:89.9px;width:62.8px;height:2.4px;background:linear-gradient(90deg,#000,#00f);box-shadow:0 0 0 0.8px #3a3a3a,0 1px 0 0.5px #6a6a6a"></div>
<svg style="position:absolute;left:598.5px;top:93.5px" width="5" height="4"><path d="M2.5 0L5 3.6H0Z" fill="#c4c4c4"/></svg>
<div style="position:absolute;left:666.8px;top:87.9px;width:21.4px;height:10.9px;background:#444;border:0.8px solid #4e4e4e"></div>
<div class="t" style="left:668px;top:91.2px;font-size:7px;color:#e0e0e0;">0</div>
<div style="position:absolute;left:570px;top:104.5px;width:122px;height:8.5px;background:linear-gradient(90deg,#d00000 0%,#ff8000 12%,#ffff00 18%,#00a000 35%,#00c0ff 52%,#0040a0 65%,#000080 70%,#c000a0 82%,#ff0060 92%,#ff0000 100%)"></div>
<div style="position:absolute;left:570px;top:108.5px;width:122px;height:4.5px;background:linear-gradient(180deg,rgba(0,0,0,0),rgba(0,0,0,.45))"></div>
<div style="position:absolute;left:570px;top:104.5px;width:122px;height:3px;background:linear-gradient(180deg,rgba(255,255,255,.35),rgba(255,255,255,0))"></div>
<div style="position:absolute;left:687px;top:104.5px;width:5px;height:4px;background:#fff"></div>
<div style="position:absolute;left:687px;top:108.5px;width:5px;height:4.5px;background:#000"></div>
<div style="position:absolute;left:567.5px;top:116.5px;width:134px;height:2px;background:#2f2f2f"></div>
<div style="position:absolute;left:567.5px;top:118.3px;width:134px;height:9.2px;background:#3b3b3b"></div>
<div style="position:absolute;left:567.5px;top:118.3px;width:20.8px;height:9.2px;background:#535353"></div>
<div style="position:absolute;left:588.3px;top:118.3px;width:21px;height:9.2px;background:#444"></div>
<div style="position:absolute;left:608.6999999999999px;top:118.3px;width:0.8px;height:9.2px;background:#353535"></div>
<div class="t" style="left:571.6px;top:120.89999999999999px;font-size:6.6px;color:#e8e8e8;">调整</div>
<div class="t" style="left:592.3px;top:120.89999999999999px;font-size:6.6px;color:#a0a0a0;">样式</div>
<svg style="position:absolute;left:691.8px;top:120.89999999999999px" width="9" height="6"><path d="M0.3 1.6H3L1.65 3.4Z" fill="#d8d8d8"/><path d="M3.6 0.5H8.4M3.6 2.4H8.4M3.6 4.3H8.4" stroke="#9a9a9a" stroke-width="0.9"/></svg>
<div class="t" style="left:572.5px;top:132.2px;font-size:7.2px;color:#e2e2e2;">添加调整</div>
<svg style="position:absolute;left:593.5px;top:145px" width="11" height="10"><circle cx="5.5" cy="5" r="2.6" fill="#d4d4d4"/><path d="M5.5 3.2A1.8 1.8 0 0 1 5.5 6.8Z" fill="#555"/><path d="M5.5 0V1.4M5.5 8.6V10M0 5H1.4M9.6 5H11M1.6 1.2L2.6 2.2M8.4 7.8L9.4 8.8M9.4 1.2L8.4 2.2M2.6 7.8L1.6 8.8" stroke="#d4d4d4" stroke-width="1"/></svg>
<svg style="position:absolute;left:607px;top:146px" width="12" height="8"><path d="M0 8V5.5H1V4H2V6H3V2.5H4V5H5V1H6V4.5H7V0.5H8V3.5H9V2H10V5H11V6H12V8Z" fill="#d4d4d4"/></svg>
<svg style="position:absolute;left:621.5px;top:145.8px" width="10" height="9"><rect x="0.5" y="0.5" width="9" height="8" fill="#8a8a8a" stroke="#d4d4d4" stroke-width="0.9"/><path d="M0.5 3H9.5M0.5 5.7H9.5" stroke="#bdbdbd" stroke-width="0.6"/><path d="M1 8Q3.5 7 5 4.5T9 1" stroke="#f4f4f4" stroke-width="1" fill="none"/></svg>
<svg style="position:absolute;left:634.8px;top:145.8px" width="10" height="9"><rect x="0.5" y="0.5" width="9" height="8" fill="#cfcfcf" stroke="#d4d4d4" stroke-width="0.9"/><path d="M0.5 8.5L9.5 0.5V8.5Z" fill="#7a7a7a"/><path d="M0.5 8.5L9.5 0.5" stroke="#333" stroke-width="1"/><rect x="1.8" y="2" width="3" height="1" fill="#444"/></svg>
<svg style="position:absolute;left:648.3px;top:145.6px" width="10" height="9"><path d="M0.5 0.5H9.5L5 8.5Z" fill="#9a9a9a" stroke="#d4d4d4" stroke-width="1"/><path d="M2.8 1.8H7.2L5 5.8Z" fill="#5a5a5a"/></svg>
<svg style="position:absolute;left:587.8px;top:160.6px" width="10" height="9"><rect x="0.5" y="0.5" width="9" height="8" fill="#8a8a8a" stroke="#d4d4d4" stroke-width="0.9"/><rect x="1" y="1" width="8" height="2.6" fill="#e0e0e0"/><path d="M3.7 1V3.6M6.3 1V3.6" stroke="#666" stroke-width="0.6"/><rect x="1" y="4.2" width="8" height="3.8" fill="url(#fg)"/></svg>
<svg style="position:absolute;left:601px;top:160.6px" width="10" height="9"><path d="M5 0.8V8M2.5 8.3H7.5M1 2H9" stroke="#d4d4d4" stroke-width="1"/><path d="M0 5.5L1.5 2L3 5.5ZM7 5.5L8.5 2L10 5.5Z" fill="none" stroke="#d4d4d4" stroke-width="0.8"/><path d="M0 5.5A1.5 1.2 0 0 0 3 5.5ZM7 5.5A1.5 1.2 0 0 0 10 5.5Z" fill="#d4d4d4"/><circle cx="5" cy="1.5" r="1.2" fill="#d4d4d4"/></svg>
<svg style="position:absolute;left:614.5px;top:160.8px" width="10" height="9"><rect x="0.5" y="0.5" width="9" height="8" fill="#e6e6e6" stroke="#d4d4d4" stroke-width="0.9"/><rect x="1" y="1" width="3.8" height="7" fill="#3a3a3a"/></svg>
<svg style="position:absolute;left:627.8px;top:160.3px" width="11" height="10"><rect x="0.5" y="0.5" width="7.5" height="6" fill="#c8c8c8" stroke="#d4d4d4" stroke-width="0.8"/><rect x="2" y="2" width="4" height="3" fill="#888"/><circle cx="7" cy="6.6" r="3" fill="#8e8e8e" stroke="#d4d4d4" stroke-width="0.9"/></svg>
<svg style="position:absolute;left:641.4px;top:160.6px" width="10" height="9"><circle cx="5" cy="2.8" r="2.6" fill="#e6e6e6"/><circle cx="2.8" cy="6.1" r="2.6" fill="#cfcfcf"/><circle cx="7.2" cy="6.1" r="2.6" fill="#bdbdbd"/><path d="M5 2.8L2.8 6.1H7.2Z" fill="#555"/></svg>
<svg style="position:absolute;left:655px;top:160.8px" width="10" height="9"><rect x="0.5" y="0.5" width="9" height="8" fill="#8a8a8a" stroke="#d4d4d4" stroke-width="0.9"/><path d="M3.5 0.5V8.5M6.5 0.5V8.5M0.5 3.3H9.5M0.5 6H9.5" stroke="#d4d4d4" stroke-width="0.8"/></svg>
<svg style="position:absolute;left:594.2px;top:175.2px" width="10" height="9"><rect x="0.5" y="0.5" width="9" height="8" fill="#bdbdbd" stroke="#d4d4d4" stroke-width="0.9"/><rect x="1.5" y="1.5" width="7" height="6" fill="#4a4a4a"/><path d="M2 7Q3 2.5 5 4.5T8 2" stroke="#e6e6e6" stroke-width="1.1" fill="none"/></svg>
<svg style="position:absolute;left:607.8px;top:175.2px" width="10" height="9"><rect x="0.5" y="0.5" width="9" height="8" fill="#9a9a9a" stroke="#d4d4d4" stroke-width="0.9"/><path d="M1 7L7 1M3 8L9 2M1 4.5L4.5 1" stroke="#dedede" stroke-width="1.1"/></svg>
<svg style="position:absolute;left:621px;top:175.2px" width="10" height="9"><rect x="0.5" y="0.5" width="9" height="8" fill="#d0d0d0" stroke="#d4d4d4" stroke-width="0.9"/><path d="M1 7.5Q4 5 5 4.5T9 1.5" stroke="#2a2a2a" stroke-width="2" fill="none"/></svg>
<svg style="position:absolute;left:634.7px;top:175.2px" width="10" height="9"><rect x="0.5" y="0.5" width="9" height="8" fill="#bdbdbd" stroke="#d4d4d4" stroke-width="0.9"/><path d="M1 1L5 4.5L1 8ZM9 1L5 4.5L9 8Z" fill="#6a6a6a"/></svg>
<svg style="position:absolute;left:648.5px;top:175.2px" width="10" height="9"><defs><linearGradient id="gm" x1="0" y1="0" x2="1" y2="0"><stop offset="0" stop-color="#333"/><stop offset="1" stop-color="#e6e6e6"/></linearGradient></defs><rect x="0.5" y="0.5" width="9" height="8" fill="url(#gm)" stroke="#d4d4d4" stroke-width="0.9"/></svg>
<div style="position:absolute;left:567.5px;top:189.8px;width:134px;height:2.2px;background:#363636"></div>
<div style="position:absolute;left:567.5px;top:192px;width:134px;height:9.6px;background:#3b3b3b"></div>
<div style="position:absolute;left:567.5px;top:192px;width:20.8px;height:9.6px;background:#535353"></div>
<div style="position:absolute;left:588.3px;top:192px;width:21px;height:9.6px;background:#444"></div>
<div style="position:absolute;left:608.6999999999999px;top:192px;width:0.8px;height:9.6px;background:#353535"></div>
<div style="position:absolute;left:609.3px;top:192px;width:21px;height:9.6px;background:#444"></div>
<div style="position:absolute;left:629.6999999999999px;top:192px;width:0.8px;height:9.6px;background:#353535"></div>
<div class="t" style="left:571.8px;top:194.6px;font-size:6.6px;color:#e8e8e8;">图层</div>
<div class="t" style="left:592.5px;top:194.6px;font-size:6.6px;color:#a0a0a0;">通道</div>
<div class="t" style="left:613.5px;top:194.6px;font-size:6.6px;color:#a0a0a0;">路径</div>
<svg style="position:absolute;left:691.8px;top:194.6px" width="9" height="6"><path d="M0.3 1.6H3L1.65 3.4Z" fill="#d8d8d8"/><path d="M3.6 0.5H8.4M3.6 2.4H8.4M3.6 4.3H8.4" stroke="#9a9a9a" stroke-width="0.9"/></svg>
<div style="position:absolute;left:570.8px;top:204px;width:38.4px;height:11px;background:linear-gradient(#676767,#5b5b5b);border:1px solid #454545;border-radius:1.5px"></div>
<svg style="position:absolute;left:573px;top:206.3px" width="7" height="7"><circle cx="4.2" cy="2.8" r="2.2" fill="none" stroke="#e0e0e0" stroke-width="1"/><path d="M2.6 4.4L0.6 6.4" stroke="#e0e0e0" stroke-width="1.2"/></svg>
<div class="t" style="left:580.5px;top:207px;font-size:6.6px;color:#e6e6e6;">类型</div>
<svg style="position:absolute;left:603.5px;top:206.8px" width="4" height="6"><path d="M0 2.2L2 0L4 2.2ZM0 3.8L2 6L4 3.8Z" fill="#d0d0d0"/></svg>
<svg style="position:absolute;left:620.5px;top:206px" width="9" height="7.5"><rect x="0.5" y="0.5" width="8" height="6.5" fill="#666" stroke="#cfcfcf" stroke-width="0.9"/><path d="M1.5 6L3.5 3.5L5 5L6 4L7.5 6Z" fill="#cfcfcf"/><circle cx="6.5" cy="2.5" r="0.8" fill="#cfcfcf"/></svg>
<svg style="position:absolute;left:634.5px;top:206.3px" width="7" height="7"><circle cx="3.5" cy="3.5" r="3.2" fill="#cfcfcf"/><path d="M1.2 5.8L5.8 1.2A3.2 3.2 0 0 1 1.2 5.8Z" fill="#666"/></svg>
<svg style="position:absolute;left:648px;top:206.3px" width="7.5" height="7"><path d="M0.5 0.5H7V2.2H6.2L6 1.4H4.3V6H5.3V6.6H2.2V6H3.2V1.4H1.5L1.3 2.2H0.5Z" fill="#d0d0d0"/></svg>
<svg style="position:absolute;left:661.8px;top:206.3px" width="7.5" height="7"><rect x="1.2" y="1.2" width="5" height="4.6" fill="none" stroke="#cfcfcf" stroke-width="1"/><rect x="0" y="0" width="2.2" height="2.2" fill="#cfcfcf"/><rect x="5.2" y="0" width="2.2" height="2.2" fill="#cfcfcf"/><rect x="0" y="4.8" width="2.2" height="2.2" fill="#cfcfcf"/><rect x="5.2" y="4.8" width="2.2" height="2.2" fill="#cfcfcf"/></svg>
<svg style="position:absolute;left:675.5px;top:206.3px" width="7" height="7"><path d="M2.5 0.5H5.2L6.5 1.8V6.5H2.5Z" fill="none" stroke="#cfcfcf" stroke-width="0.9"/><rect x="0" y="3.5" width="3.8" height="3.5" fill="#cfcfcf"/></svg>
<div style="position:absolute;left:694.8px;top:205.3px;width:4.9px;height:8.6px;background:#2e2e2e;border-radius:1px"></div>
<div style="position:absolute;left:695.3px;top:205.8px;width:3.9px;height:3.6px;background:#7a7a7a"></div>
<div style="position:absolute;left:567.5px;top:216.6px;width:134px;height:1px;background:#444"></div>
<div style="position:absolute;left:571px;top:219.6px;width:60.2px;height:10.4px;background:linear-gradient(#676767,#5b5b5b);border:1px solid #454545;border-radius:1.5px"></div>
<div class="t" style="left:575px;top:222.5px;font-size:6.6px;color:#e6e6e6;">正常</div>
<svg style="position:absolute;left:625px;top:222.3px" width="4" height="6"><path d="M0 2.2L2 0L4 2.2ZM0 3.8L2 6L4 3.8Z" fill="#d0d0d0"/></svg>
<div class="t" style="left:636px;top:223px;font-size:6.6px;color:#e0e0e0;">不透明度:</div>
<div style="position:absolute;left:668.6px;top:220.5px;width:20px;height:9.8px;background:#323232"></div>
<div class="t" style="left:670px;top:223px;font-size:6.6px;color:#e0e0e0;">50%</div>
<div style="position:absolute;left:688.6px;top:220.5px;width:10.2px;height:9.8px;background:#6b6b6b"></div>
<svg style="position:absolute;left:691.7px;top:224.7px" width="4" height="1.5"><path d="M0 0H4L3.2 1.3H0.8Z" fill="#eeeeee"/></svg>
<div class="t" style="left:571px;top:239px;font-size:6.6px;color:#e0e0e0;">锁定:</div>
<div style="position:absolute;left:591.5px;top:238.5px;width:6px;height:5.5px;background:repeating-conic-gradient(#d8d8d8 0 25%,#666 0 50%) 0 0/3px 3px;border:0.5px solid #ccc"></div>
<svg style="position:absolute;left:600.5px;top:238px" width="8" height="7"><path d="M0.5 4.5A3.5 2.5 0 0 0 7.5 4.5Z" fill="#d0d0d0"/><path d="M4 4L7 0.5" stroke="#d0d0d0" stroke-width="1"/></svg>
<svg style="position:absolute;left:615.5px;top:237.5px" width="7" height="8"><path d="M0.5 3.5H6.5M3.5 1V7M0.5 3.5L1.8 2.3M0.5 3.5L1.8 4.7M6.5 3.5L5.2 2.3M6.5 3.5L5.2 4.7M3.5 7L2.3 5.8M3.5 7L4.7 5.8" stroke="#cfcfcf" stroke-width="0.8" fill="none"/></svg>
<svg style="position:absolute;left:629.5px;top:237.4px" width="6.5" height="8"><path d="M1.6 3.6V2.4A1.65 1.65 0 0 1 4.9 2.4V3.6" stroke="#d6d6d6" stroke-width="1" fill="none"/><rect x="0.3" y="3.5" width="6" height="4.2" fill="#d6d6d6"/><rect x="2.9" y="4.7" width="0.8" height="1.6" fill="#555"/></svg>
<div class="t" style="left:650px;top:239px;font-size:6.6px;color:#e0e0e0;">填充:</div>
<div style="position:absolute;left:668.6px;top:236.5px;width:20px;height:10px;background:#323232"></div>
<div class="t" style="left:670px;top:239px;font-size:6.6px;color:#e0e0e0;">100%</div>
<div style="position:absolute;left:688.6px;top:236.5px;width:10.2px;height:10px;background:#6b6b6b"></div>
<svg style="position:absolute;left:691.7px;top:240.8px" width="4" height="1.5"><path d="M0 0H4L3.2 1.3H0.8Z" fill="#eeeeee"/></svg>
<div style="position:absolute;left:567.5px;top:248.9px;width:134px;height:1px;background:#3c3c3c"></div>
<div style="position:absolute;left:567.5px;top:250px;width:127px;height:21.5px;background:#535353"></div>
<div style="position:absolute;left:567.5px;top:270.5px;width:127px;height:1px;background:#3f3f3f"></div>
<div style="position:absolute;left:584.3px;top:250px;width:0.8px;height:20.5px;background:#4a4a4a"></div>
<svg style="position:absolute;left:571.5px;top:257.75px" width="9" height="6"><path d="M0.5 3Q4.5 -0.8 8.5 3Q4.5 6.8 0.5 3Z" fill="none" stroke="#cfcfcf" stroke-width="0.9"/><circle cx="4.5" cy="3" r="1.3" fill="#cfcfcf"/></svg>
<div style="position:absolute;left:586.4px;top:251.9px;width:14.7px;height:17.7px;background:repeating-conic-gradient(#cfcfcf 0 25%,#fff 0 50%) 0 0/4.2px 4.2px;border:1px solid #bdbdbd"></div>
<svg style="position:absolute;left:586.4px;top:251.9px" width="15" height="18"><path d="M3.5 12.5Q5 10.5 7 11.5T10.5 8.5Q9.5 6.5 10.8 5.6" stroke="#2aa6e8" stroke-width="1.7" fill="none" opacity="0.85"/></svg>
<div class="t" style="left:606px;top:258.75px;font-size:6.6px;color:#eeeeee;">椭圆 1 拷贝 5</div>
<div style="position:absolute;left:567.5px;top:271.5px;width:127px;height:22.0px;background:#535353"></div>
<div style="position:absolute;left:567.5px;top:292.5px;width:127px;height:1px;background:#3f3f3f"></div>
<div style="position:absolute;left:584.3px;top:271.5px;width:0.8px;height:21.0px;background:#4a4a4a"></div>
<svg style="position:absolute;left:571.5px;top:279.5px" width="9" height="6"><path d="M0.5 3Q4.5 -0.8 8.5 3Q4.5 6.8 0.5 3Z" fill="none" stroke="#cfcfcf" stroke-width="0.9"/><circle cx="4.5" cy="3" r="1.3" fill="#cfcfcf"/></svg>
<div style="position:absolute;left:586.4px;top:273.4px;width:14.7px;height:18.2px;background:repeating-conic-gradient(#cfcfcf 0 25%,#fff 0 50%) 0 0/4.2px 4.2px;border:1px solid #bdbdbd"></div>
<svg style="position:absolute;left:586.4px;top:273.4px" width="15" height="18"><path d="M3.2 7.5Q5 4.5 7 6T10 4" stroke="#2aa6e8" stroke-width="1.7" fill="none" opacity="0.85"/><path d="M4.5 8.5Q6.5 7.5 8 8.2" stroke="#2aa6e8" stroke-width="1" fill="none" opacity="0.7"/></svg>
<div class="t" style="left:606px;top:280.5px;font-size:6.6px;color:#eeeeee;">椭圆 1 拷贝 4</div>
<div style="position:absolute;left:567.5px;top:293.5px;width:127px;height:21.69999999999999px;background:#535353"></div>
<div style="position:absolute;left:584.6px;top:293.5px;width:110px;height:20.69999999999999px;background:#6b7b94"></div>
<div style="position:absolute;left:567.5px;top:314.2px;width:127px;height:1px;background:#3f3f3f"></div>
<div style="position:absolute;left:584.3px;top:293.5px;width:0.8px;height:20.69999999999999px;background:#4a4a4a"></div>
<svg style="position:absolute;left:571.5px;top:301.35px" width="9" height="6"><path d="M0.5 3Q4.5 -0.8 8.5 3Q4.5 6.8 0.5 3Z" fill="none" stroke="#cfcfcf" stroke-width="0.9"/><circle cx="4.5" cy="3" r="1.3" fill="#cfcfcf"/></svg>
<div style="position:absolute;left:586.4px;top:295.4px;width:14.7px;height:17.899999999999988px;background:repeating-conic-gradient(#cfcfcf 0 25%,#fff 0 50%) 0 0/4.2px 4.2px;border:1px solid #bdbdbd"></div>
<div style="position:absolute;left:593.5px;top:300.4px;width:1.2px;height:1.2px;background:#444"></div>
<svg style="position:absolute;left:585px;top:294.0px" width="18" height="21"><path d="M0.5 4V0.5H4M13.5 0.5H17V4M17 16.5V20H13.5M4 20H0.5V16.5" stroke="#dfe6ee" stroke-width="1" fill="none"/></svg>
<div class="t" style="left:606px;top:302.35px;font-size:6.6px;color:#eeeeee;">图层 3</div>
<div style="position:absolute;left:567.5px;top:315.2px;width:127px;height:21.80000000000001px;background:#535353"></div>
<div style="position:absolute;left:567.5px;top:336px;width:127px;height:1px;background:#3f3f3f"></div>
<div style="position:absolute;left:584.3px;top:315.2px;width:0.8px;height:20.80000000000001px;background:#4a4a4a"></div>
<svg style="position:absolute;left:571.5px;top:323.1px" width="9" height="6"><path d="M0.5 3Q4.5 -0.8 8.5 3Q4.5 6.8 0.5 3Z" fill="none" stroke="#cfcfcf" stroke-width="0.9"/><circle cx="4.5" cy="3" r="1.3" fill="#cfcfcf"/></svg>
<div style="position:absolute;left:586.4px;top:317.09999999999997px;width:14.7px;height:18.00000000000001px;background:repeating-conic-gradient(#cfcfcf 0 25%,#fff 0 50%) 0 0/4.2px 4.2px;border:1px solid #bdbdbd"></div>
<div style="position:absolute;left:594.2px;top:318.59999999999997px;width:1.6px;height:5.5px;background:#19a0e4"></div>
<div class="t" style="left:606px;top:324.1px;font-size:6.6px;color:#eeeeee;">图层 2</div>
<div style="position:absolute;left:567.5px;top:337px;width:127px;height:22.19999999999999px;background:#535353"></div>
<div style="position:absolute;left:567.5px;top:358.2px;width:127px;height:1px;background:#3f3f3f"></div>
<div style="position:absolute;left:584.3px;top:337px;width:0.8px;height:21.19999999999999px;background:#4a4a4a"></div>
<svg style="position:absolute;left:571.5px;top:345.1px" width="9" height="6"><path d="M0.5 3Q4.5 -0.8 8.5 3Q4.5 6.8 0.5 3Z" fill="none" stroke="#cfcfcf" stroke-width="0.9"/><circle cx="4.5" cy="3" r="1.3" fill="#cfcfcf"/></svg>
<div style="position:absolute;left:586.4px;top:338.9px;width:14.7px;height:18.399999999999988px;background:#fccb88;border:1px solid #bdbdbd"></div>
<div class="t" style="left:606px;top:346.1px;font-size:6.6px;color:#eeeeee;">图层 1</div>
<div style="position:absolute;left:567.5px;top:359.2px;width:127px;height:23.400000000000034px;background:#535353"></div>
<div style="position:absolute;left:567.5px;top:381.6px;width:127px;height:1px;background:#3f3f3f"></div>
<div style="position:absolute;left:584.3px;top:359.2px;width:0.8px;height:22.400000000000034px;background:#4a4a4a"></div>
<svg style="position:absolute;left:571.5px;top:367.9px" width="9" height="6"><path d="M0.5 3Q4.5 -0.8 8.5 3Q4.5 6.8 0.5 3Z" fill="none" stroke="#cfcfcf" stroke-width="0.9"/><circle cx="4.5" cy="3" r="1.3" fill="#cfcfcf"/></svg>
<div style="position:absolute;left:586.4px;top:361.09999999999997px;width:14.7px;height:19.600000000000033px;background:#fff;border:1px solid #bdbdbd"></div>
<div style="position:absolute;left:567.5px;top:382.6px;width:127px;height:13px;background:#535353"></div>
<div style="position:absolute;left:694.5px;top:250px;width:6px;height:146px;background:#3e3e3e"></div>
<div style="position:absolute;left:567.5px;top:395.6px;width:134px;height:12.4px;background:#4a4a4a;border-top:1px solid #3a3a3a"></div>
<svg style="position:absolute;left:588px;top:399px" width="9" height="6"><path d="M3.2 1H1.8A1.8 1.8 0 0 0 1.8 4.6H3.2M5.8 1H7.2A1.8 1.8 0 0 1 7.2 4.6H5.8M3 2.8H6" stroke="#b4b4b4" stroke-width="0.9" fill="none"/></svg>
<div class="t" style="left:604px;top:398.2px;font-size:7.8px;color:#b4b4b4;font-style:italic;font-family:&#39;Liberation Serif&#39;,serif">fx</div>
<div style="position:absolute;left:610.5px;top:403.5px;width:1px;height:1px;background:#b4b4b4"></div>
<svg style="position:absolute;left:619px;top:399px" width="7.5" height="5.6"><rect x="0" y="0" width="7.5" height="5.6" fill="#b4b4b4"/><circle cx="3.75" cy="2.8" r="1.6" fill="#4c4c4c"/></svg>
<svg style="position:absolute;left:634px;top:398.6px" width="8" height="7"><circle cx="3.5" cy="3.5" r="3.2" fill="#b4b4b4"/><path d="M1.2 5.8L5.8 1.2A3.2 3.2 0 0 1 1.2 5.8Z" fill="#4c4c4c"/><rect x="7" y="6" width="1" height="1" fill="#b4b4b4"/></svg>
<svg style="position:absolute;left:649px;top:398.8px" width="7.5" height="6"><path d="M0 0.5H3L3.8 1.5H7.5V6H0Z" fill="#b4b4b4"/></svg>
<svg style="position:absolute;left:664.8px;top:398.8px" width="6.6" height="6"><path d="M0 0H6.6V6H0Z" fill="#b4b4b4"/><path d="M0 3.5L2.5 6H0Z" fill="#4c4c4c"/><rect x="0.8" y="3.8" width="1.6" height="1.6" fill="#b4b4b4"/></svg>
<svg style="position:absolute;left:679.3px;top:398.6px" width="7.2" height="6.4"><rect x="0" y="0.8" width="7.2" height="1" fill="#b4b4b4"/><rect x="2.5" y="0" width="2.2" height="1" fill="#b4b4b4"/><path d="M0.8 2.3H6.4V6.4H0.8Z" fill="#b4b4b4"/><path d="M2.5 3V5.8M3.6 3V5.8M4.7 3V5.8" stroke="#4c4c4c" stroke-width="0.5"/></svg>
<div style="position:absolute;left:702.3px;top:37.5px;width:1.8px;height:371px;background:#2a2a2a"></div>
<div style="position:absolute;left:704.1px;top:37.5px;width:0.9px;height:371px;background:#444"></div>
<svg style="position:absolute;left:580px;top:363px" width="31" height="26"><ellipse cx="10.8" cy="9.9" rx="9.3" ry="8.1" fill="#e9e9e9"/><path d="M3.5 15L4 19.8L8 16.5Z" fill="#e9e9e9"/><circle cx="7" cy="7.3" r="1.1" fill="#5a5a5a"/><circle cx="15" cy="7.3" r="1.1" fill="#5a5a5a"/><ellipse cx="20" cy="16.6" rx="8.7" ry="7.6" fill="#e6e6e6" stroke="#4a4a4a" stroke-width="0.9"/><path d="M24 22L26 24.6L21.5 23.3Z" fill="#e6e6e6"/><circle cx="17.2" cy="13.8" r="1.1" fill="#5a5a5a"/><circle cx="23.3" cy="13.8" r="1.1" fill="#5a5a5a"/></svg>
<div class="t" style="left:607.5px;top:369.5px;font-size:6.6px;color:#d0d0d0;font-style:italic">背</div>
<div class="t" style="left:612.8px;top:368.1px;font-size:18.6px;color:#eeeeee;text-shadow:0 0 1.5px #3a3a3a,0 0 1px #3a3a3a;transform:scaleX(0.91);transform-origin:0 0">极微设计</div>
<svg style="position:absolute;left:680px;top:366px" width="6" height="7"><path d="M1.5 3V2A1.5 1.5 0 0 1 4.5 2V3" stroke="#cfcfcf" stroke-width="0.9" fill="none"/><rect x="0.5" y="3" width="5" height="3.6" fill="#cfcfcf"/></svg>
<div style="position:absolute;left:632.5px;top:217.4px;width:71px;height:16.6px;border:2.1px solid #f01c1c;border-radius:1.5px"></div>
<svg style="position:absolute;left:0;top:0" width="705" height="408"><polygon points="549.72,251.91 616.74,235.36 615.17,232.84 630.80,234.90 617.40,243.20 617.79,240.25 549.88,252.69" fill="#f41c1c"/></svg>
</body></html>
